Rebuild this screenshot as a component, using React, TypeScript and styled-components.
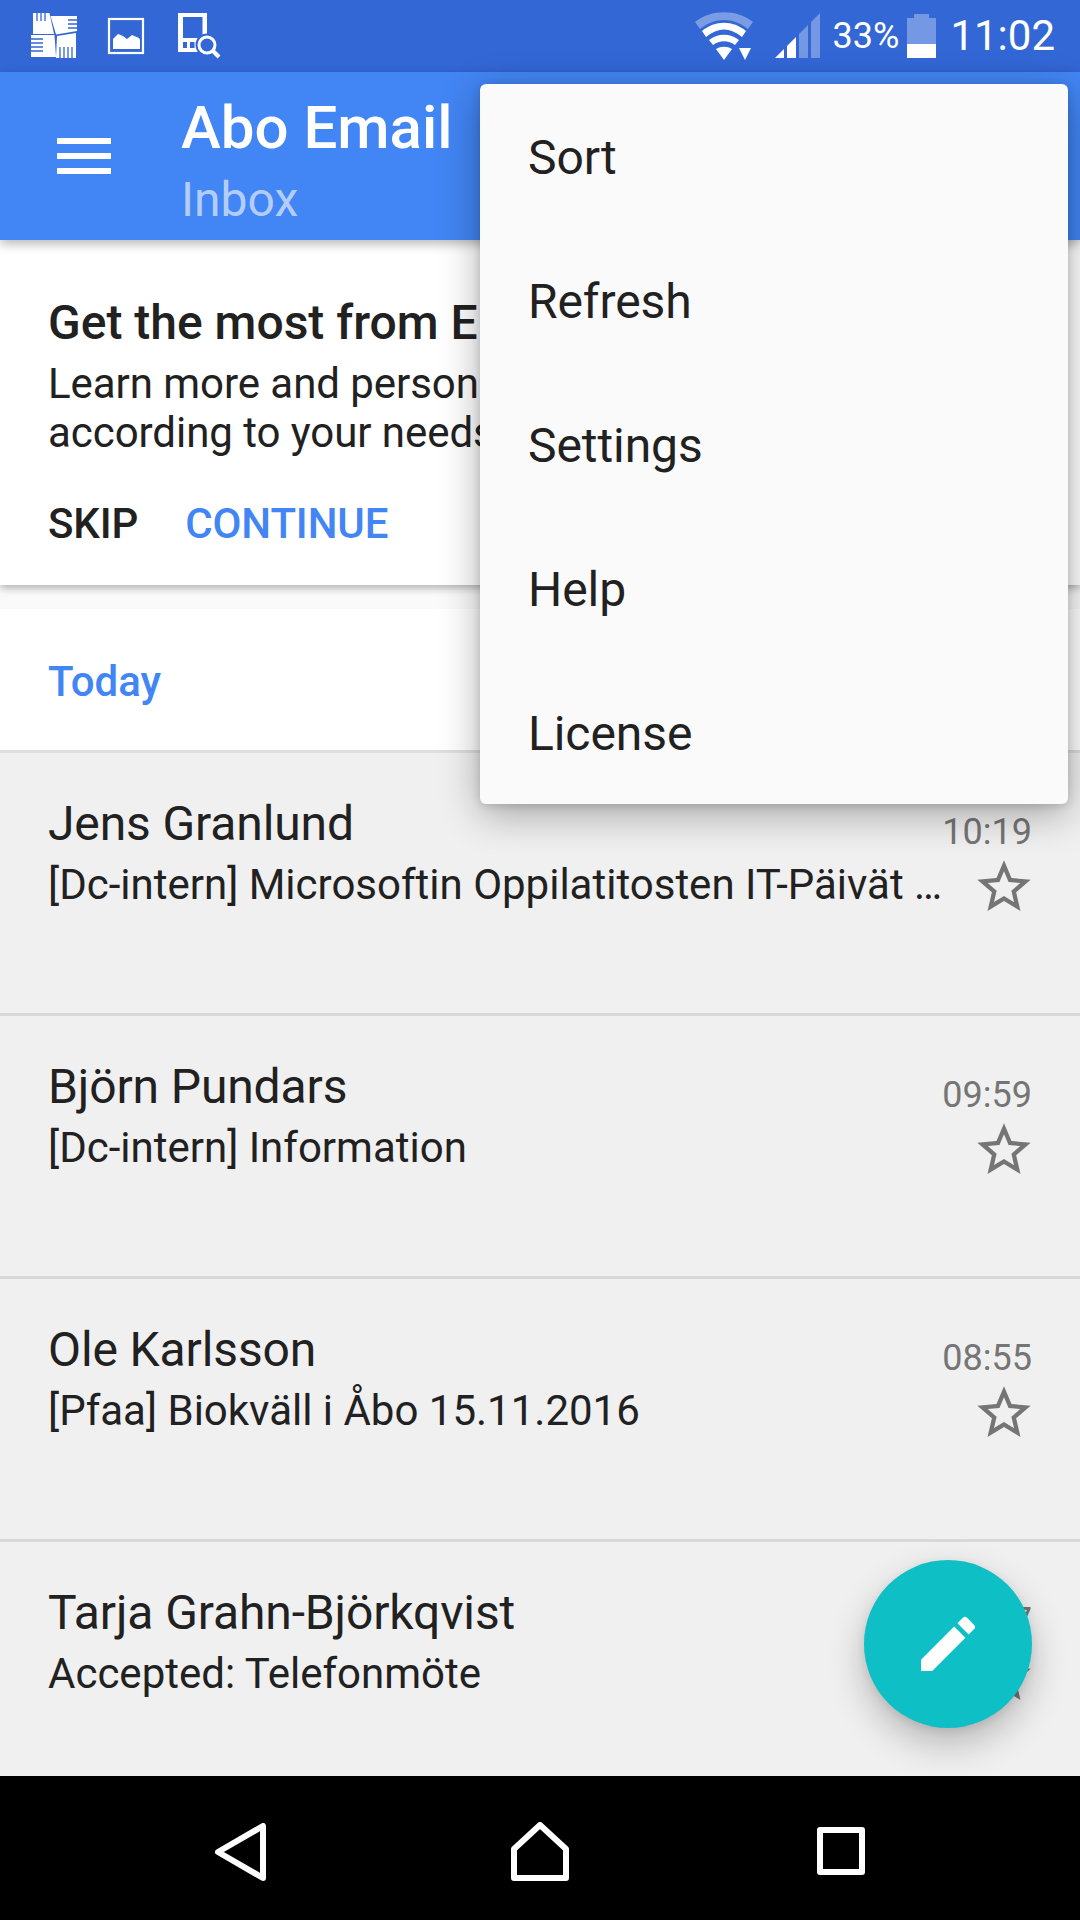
import React from "react";
import styled, { createGlobalStyle } from "styled-components";

const Global = createGlobalStyle`
  html, body { margin: 0; padding: 0; background: #000; }
  body { font-family: Roboto, "Noto Sans", sans-serif; -webkit-font-smoothing: antialiased; }
  * { box-sizing: border-box; }
`;

const Screen = styled.div`
  position: relative;
  width: 1080px;
  height: 1920px;
  overflow: hidden;
  display: flex;
  flex-direction: column;
  background: #f0f0f0;
  color: #212121;
`;

const StatusBar = styled.div`
  flex: 0 0 72px;
  display: flex;
  align-items: center;
  justify-content: space-between;
  padding: 0 25px 0 30px;
  background: #3367d6;
  color: #fff;
`;
const StatusGroup = styled.div`
  display: flex;
  align-items: center;
  gap: ${(p: { $gap: number }) => p.$gap}px;
`;
const StatusIcon = styled.svg<{ $left?: number }>`
  display: block;
  flex: none;
  margin-left: ${(p) => p.$left ?? 0}px;
`;
const Percent = styled.span`
  font-size: 36px;
  line-height: 72px;
  margin: 0 -1px 0 3px;
`;
const Clock = styled.span`
  font-size: 42px;
  line-height: 72px;
  margin-left: 5px;
`;

const AppBar = styled.header`
  position: relative;
  z-index: 2;
  flex: 0 0 168px;
  display: flex;
  align-items: center;
  padding: 0 0 0 57px;
  background: #4285f4;
  box-shadow: 0 4px 10px rgba(0, 0, 0, 0.28);
`;
const MenuIcon = styled.svg`
  display: block;
  margin-right: 70px;
`;
const Titles = styled.div`
  display: flex;
  flex-direction: column;
  padding-top: 8px;
`;
const AppTitle = styled.div`
  font-size: 60px;
  font-weight: 500;
  line-height: 72px;
  color: #fff;
`;
const AppSub = styled.div`
  font-size: 48px;
  line-height: 56px;
  margin-top: 8px;
  color: rgba(255, 255, 255, 0.62);
`;

const Content = styled.main`
  flex: 1;
  min-height: 0;
  overflow: hidden;
  display: flex;
  flex-direction: column;
  background: #fafafa;
`;
const PromoCard = styled.section`
  position: relative;
  z-index: 1;
  flex: 0 0 345px;
  padding: 53px 48px 0;
  background: #fff;
  box-shadow: 0 3px 8px rgba(0, 0, 0, 0.3);
  margin-bottom: 24px;
`;
const PromoTitle = styled.div`
  font-size: 48px;
  font-weight: 500;
  line-height: 60px;
  white-space: nowrap;
`;
const PromoBody = styled.div`
  font-size: 42px;
  line-height: 49px;
  margin-top: 6px;
  white-space: nowrap;
  letter-spacing: -0.05px;
`;
const PromoActions = styled.div`
  display: flex;
  gap: 47px;
  margin-top: 42px;
`;
const ActionButton = styled.span<{ $primary?: boolean }>`
  font-size: 42px;
  font-weight: 500;
  line-height: 50px;
  letter-spacing: -0.12px;
  color: ${(p) => (p.$primary ? "#4285f4" : "#212121")};
`;
const DayHeader = styled.div`
  flex: 0 0 144px;
  display: flex;
  align-items: center;
  padding: 4px 48px 0;
  background: #fff;
  border-bottom: 3px solid #dedede;
  font-size: 42px;
  font-weight: 500;
  color: #4285f4;
`;
const MailRow = styled.article`
  flex: 0 0 263px;
  display: flex;
  justify-content: space-between;
  padding: 39px 48px 0;
  background: #f0f0f0;
  border-bottom: 3px solid #d8d8d8;
`;
const MailText = styled.div`
  min-width: 0;
`;
const Sender = styled.div`
  font-size: 48px;
  line-height: 64px;
  letter-spacing: -0.12px;
  white-space: nowrap;
`;
const Subject = styled.div`
  font-size: 42px;
  line-height: 56px;
  margin-top: 1px;
  white-space: nowrap;
`;
const MailMeta = styled.div`
  flex: none;
  display: flex;
  flex-direction: column;
  align-items: flex-end;
`;
const MailTime = styled.div`
  margin-top: 18px;
  font-size: 36px;
  line-height: 44px;
  color: #757575;
`;
const Star = styled.svg`
  display: block;
  margin: 1px -4px 0 0;
`;

const NavBar = styled.nav`
  position: relative;
  z-index: 2;
  flex: 0 0 144px;
  display: grid;
  grid-template-columns: repeat(3, 300px);
  align-items: center;
  justify-items: center;
  background: #000;
  padding: 8px 0 0 90px;
`;
const NavIcon = styled.svg`
  display: block;
`;

const OverflowMenu = styled.ul`
  position: absolute;
  z-index: 5;
  top: 84px;
  left: 480px;
  width: 588px;
  margin: 0;
  padding: 0;
  list-style: none;
  background: #fafafa;
  border-radius: 6px;
  box-shadow: 0 10px 40px rgba(0, 0, 0, 0.32), 0 2px 8px rgba(0, 0, 0, 0.14);
`;
const MenuItem = styled.li`
  height: 144px;
  padding: 2px 48px 0;
  display: flex;
  align-items: center;
  font-size: 48px;
  letter-spacing: -0.08px;
  color: #212121;
`;

const Fab = styled.button`
  position: absolute;
  z-index: 4;
  left: 864px;
  top: 1560px;
  width: 168px;
  height: 168px;
  padding: 0;
  border: 0;
  border-radius: 50%;
  display: flex;
  align-items: center;
  justify-content: center;
  background: #0fbfc6;
  box-shadow: 0 16px 36px rgba(0, 0, 0, 0.24), 0 3px 10px rgba(0, 0, 0, 0.08);
`;

const mails = [
  { from: "Jens Granlund", subject: "[Dc-intern] Microsoftin Oppilatitosten IT-Päivät …", time: "10:19" },
  { from: "Björn Pundars", subject: "[Dc-intern] Information", time: "09:59" },
  { from: "Ole Karlsson", subject: "[Pfaa] Biokväll i Åbo 15.11.2016", time: "08:55" },
  { from: "Tarja Grahn-Björkqvist", subject: "Accepted: Telefonmöte", time: "08:07" },
];
const menu = ["Sort", "Refresh", "Settings", "Help", "License"];

const AvgIcon = () => (
  <StatusIcon width="48" height="48" viewBox="0 0 48 48" fill="#fff">
    <path d="M3 1h16.500L24 22H3z" />
    <path d="M20.500 4H47v15l-21 3.500z" />
    <path d="M1 23h23.500L26 45H1z" />
    <path d="M27 24l19-3v25H26z" />
    <g stroke="#3367d6" strokeWidth="1.300">
      <path d="M7 0v9M11 0v9M15 0v9" />
      <path d="M38 8h10M38 12h10M38 16h10" />
      <path d="M0 27h13M0 31h13M0 35h13M0 39h13" />
      <path d="M30 35v12M34 35v12M38 35v12M42 35v12" />
    </g>
  </StatusIcon>
);
const PictureIcon = () => (
  <StatusIcon width="48" height="48" viewBox="0 0 48 48">
    <rect x="7" y="7" width="34" height="34" fill="none" stroke="#fff" strokeWidth="2.200" />
    <path d="M11 37V27l5-5 5 2 4 3 5-4 7 3 1 2v9z" fill="#fff" />
  </StatusIcon>
);
const DeviceIcon = () => (
  <StatusIcon width="48" height="48" viewBox="0 0 48 48">
    <path
      fillRule="evenodd"
      fill="#fff"
      d="M4 1h29v39H4zM9 5v21h19.500V5zM9 30v6h4v-6zM16 30v6h4.500v-6zM23.500 30v6h4v-6z"
    />
    <circle cx="33" cy="33" r="11.500" fill="#3367d6" />
    <circle cx="33" cy="33" r="8" fill="none" stroke="#fff" strokeWidth="3" />
    <path d="M38.500 38.500l6.500 6.500" stroke="#fff" strokeWidth="4" />
  </StatusIcon>
);
const WifiIcon = () => (
  <StatusIcon width="58" height="48" viewBox="0 0 58 48">
    <path d="M0 10C16-3 42-3 58 10l-5 7C38 5 20 5 5 17z" fill="#fff" fillOpacity="0.35" />
    <path d="M7 19C20 8 38 8 51 19l-4 6C35 15 23 15 11 25z" fill="#fff" />
    <path d="M14 28c9-7 21-7 30 0l-4 5c-7-5-15-5-22 0z" fill="#fff" />
    <path d="M21 37c5-3 11-3 16 0l-8 11z" fill="#fff" />
    <path d="M44 36h12l-6 12z" fill="#fff" />
  </StatusIcon>
);
const SignalIcon = () => (
  <StatusIcon $left={13} width="46" height="46" viewBox="0 0 46 46">
    <path d="M0 45l9-9v9z" fill="#fff" />
    <path d="M12 33l9-9v21h-9z" fill="#fff" />
    <path d="M24 21l9-9v33h-9zM36 9l9-9v45h-9z" fill="#fff" fillOpacity="0.32" />
  </StatusIcon>
);
const BatteryIcon = () => (
  <StatusIcon width="29" height="44" viewBox="0 0 29 44">
    <path d="M7 0h15v4h7v26H0V4h7z" fill="#fff" fillOpacity="0.32" />
    <rect y="30" width="29" height="14" fill="#fff" />
  </StatusIcon>
);

export default function App() {
  return (
    <Screen>
      <Global />
      <StatusBar>
        <StatusGroup $gap={24}>
          <AvgIcon />
          <PictureIcon />
          <DeviceIcon />
        </StatusGroup>
        <StatusGroup $gap={9}>
          <WifiIcon />
          <SignalIcon />
          <Percent>33%</Percent>
          <BatteryIcon />
          <Clock>11:02</Clock>
        </StatusGroup>
      </StatusBar>
      <AppBar>
        <MenuIcon width="54" height="36" viewBox="0 0 54 36" fill="#fff">
          <rect width="54" height="6" />
          <rect y="15" width="54" height="6" />
          <rect y="30" width="54" height="6" />
        </MenuIcon>
        <Titles>
          <AppTitle>Abo Email</AppTitle>
          <AppSub>Inbox</AppSub>
        </Titles>
      </AppBar>
      <Content>
        <PromoCard>
          <PromoTitle>Get the most from Email</PromoTitle>
          <PromoBody>
            Learn more and personalize the app
            <br />
            according to your needs
          </PromoBody>
          <PromoActions>
            <ActionButton>SKIP</ActionButton>
            <ActionButton $primary>CONTINUE</ActionButton>
          </PromoActions>
        </PromoCard>
        <DayHeader>Today</DayHeader>
        {mails.map((m) => (
          <MailRow key={m.from}>
            <MailText>
              <Sender>{m.from}</Sender>
              <Subject>{m.subject}</Subject>
            </MailText>
            <MailMeta>
              <MailTime>{m.time}</MailTime>
              <Star width="64" height="64" viewBox="0 0 24 24" fill="#757575">
                <path d="M22 9.240l-7.190-.620L12 2 9.190 8.630 2 9.240l5.460 4.730L5.820 21 12 17.270 18.180 21l-1.630-7.030L22 9.240zM12 15.400l-3.760 2.270 1-4.280-3.320-2.880 4.380-.380L12 6.100l1.710 4.040 4.380.380-3.320 2.880 1 4.280L12 15.400z" />
              </Star>
            </MailMeta>
          </MailRow>
        ))}
      </Content>
      <NavBar>
        <NavIcon width="58" height="58" viewBox="0 0 58 58">
          <path d="M52 3v52L7 29z" fill="none" stroke="#fff" strokeWidth="6" strokeLinejoin="round" />
        </NavIcon>
        <NavIcon width="58" height="60" viewBox="0 0 58 60">
          <path d="M3 56V27L29 3l26 24v29z" fill="none" stroke="#fff" strokeWidth="6" strokeLinejoin="round" />
        </NavIcon>
        <NavIcon width="54" height="50" viewBox="0 0 54 50">
          <rect x="7" y="3" width="42" height="42" fill="none" stroke="#fff" strokeWidth="6" strokeLinejoin="round" />
        </NavIcon>
      </NavBar>
      <OverflowMenu>
        {menu.map((item) => (
          <MenuItem key={item}>{item}</MenuItem>
        ))}
      </OverflowMenu>
      <Fab aria-label="Compose">
        <svg width="72" height="72" viewBox="0 0 24 24" fill="#fff">
          <path d="M3 17.250V21h3.750L17.810 9.940l-3.750-3.750L3 17.250zM20.710 7.040a1 1 0 0 0 0-1.410l-2.340-2.340a1 1 0 0 0-1.410 0l-1.830 1.830 3.750 3.750 1.830-1.830z" />
        </svg>
      </Fab>
    </Screen>
  );
}
